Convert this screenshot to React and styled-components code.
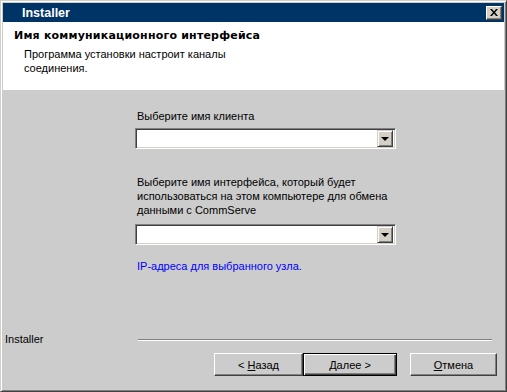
import React from "react";
import styled, { createGlobalStyle } from "styled-components";

const GlobalStyle = createGlobalStyle`
  html, body {
    margin: 0;
    padding: 0;
    background: #cccccc;
  }
  * {
    box-sizing: border-box;
  }
`;

const Window = styled.div`
  width: 507px;
  height: 392px;
  display: flex;
  flex-direction: column;
  background: #cccccc;
  border: 1px solid;
  border-color: #d4d0c8 #404040 #404040 #d4d0c8;
  box-shadow: inset 1px 1px 0 #ffffff, inset -1px -1px 0 #808080;
  padding: 2px;
  font-family: "Liberation Sans", Arial, sans-serif;
  font-size: 11px;
  line-height: 14px;
  color: #000;
`;

const TitleBar = styled.div`
  height: 19px;
  flex-shrink: 0;
  display: flex;
  align-items: center;
  justify-content: space-between;
  background: #003366;
  padding: 0 2px 0 19px;
`;

const TitleText = styled.span`
  color: #fff;
  font-weight: bold;
  font-size: 12.5px;
`;

const CloseButton = styled.div`
  width: 16px;
  height: 14px;
  display: flex;
  align-items: center;
  justify-content: center;
  background: #d4d0c8;
  border: 1px solid;
  border-color: #ffffff #404040 #404040 #ffffff;
  box-shadow: inset -1px -1px 0 #808080;
`;

const Header = styled.div`
  height: 68px;
  flex-shrink: 0;
  background: #fff;
  padding: 7px 0 0 11px;
`;

const HeaderTitle = styled.div`
  font-family: "DejaVu Sans", sans-serif;
  font-weight: bold;
  font-size: 11px;
  letter-spacing: 0.2px;
`;

const HeaderSub = styled.div`
  margin: 4px 0 0 10px;
  width: 220px;
`;

const Body = styled.div`
  flex: 1;
  display: flex;
  flex-direction: column;
`;

const Form = styled.div`
  display: flex;
  flex-direction: column;
  padding: 19px 0 0 132px;
  width: 400px;
`;

const Label = styled.div`
  padding-left: 2px;
  margin-top: ${(p) => p.$top || 0}px;
`;

const Combo = styled.div`
  width: 261px;
  height: 21px;
  margin-top: ${(p) => p.$top || 0}px;
  display: flex;
  justify-content: flex-end;
  align-items: center;
  background: #fff;
  border: 1px solid;
  border-color: #808080 #ffffff #ffffff #808080;
  box-shadow: inset 1px 1px 0 #404040, inset -1px -1px 0 #d4d0c8;
  padding: 2px;
`;

const DropButton = styled.div`
  width: 16px;
  height: 17px;
  display: flex;
  align-items: center;
  justify-content: center;
  background: #d4d0c8;
  border: 1px solid;
  border-color: #d4d0c8 #404040 #404040 #d4d0c8;
  box-shadow: inset 1px 1px 0 #ffffff, inset -1px -1px 0 #808080;
`;

const Arrow = styled.div`
  width: 0;
  height: 0;
  border-left: 4px solid transparent;
  border-right: 4px solid transparent;
  border-top: 4px solid #000;
`;

const Link = styled.div`
  color: #0000ff;
  padding-left: 2px;
  margin-top: 14px;
`;

const Footer = styled.div`
  margin-top: auto;
  display: flex;
  flex-direction: column;
  padding: 0 7px 13px 2px;
`;

const BrandRow = styled.div`
  display: flex;
  align-items: center;
`;

const Brand = styled.span`
  width: 133px;
`;

const Etched = styled.div`
  flex: 1;
  height: 2px;
  border-top: 1px solid #808080;
  border-bottom: 1px solid #ffffff;
  margin: 1px 5px 0 0;
`;

const Buttons = styled.div`
  display: flex;
  justify-content: flex-end;
  align-items: center;
  margin-top: 7px;
`;

const Button = styled.div`
  width: ${(p) => p.$w}px;
  height: 23px;
  display: flex;
  align-items: center;
  justify-content: center;
  background: #cccccc;
  border: 1px solid;
  border-color: ${(p) => (p.$default ? "#000" : "#ffffff #404040 #404040 #ffffff")};
  box-shadow: ${(p) =>
    p.$default
      ? "inset 1px 1px 0 #ffffff, inset -1px -1px 0 #404040, inset -2px -2px 0 #808080"
      : "inset -1px -1px 0 #808080"};
  margin-left: ${(p) => p.$gap || 0}px;
`;

const Key = styled.span`
  text-decoration: underline;
`;

export default function App() {
  return (
    <>
      <GlobalStyle />
      <Window>
        <TitleBar>
          <TitleText>Installer</TitleText>
          <CloseButton>
            <svg width="8" height="7" viewBox="0 0 8 7">
              <path d="M0 0h2l2 2.5L6 0h2L5 3.5 8 7H6L4 4.5 2 7H0l3-3.5z" fill="#000" />
            </svg>
          </CloseButton>
        </TitleBar>
        <Header>
          <HeaderTitle>Имя коммуникационного интерфейса</HeaderTitle>
          <HeaderSub>Программа установки настроит каналы соединения.</HeaderSub>
        </Header>
        <Body>
          <Form>
            <Label>Выберите имя клиента</Label>
            <Combo $top={5}>
              <DropButton>
                <Arrow />
              </DropButton>
            </Combo>
            <Label $top={26}>
              Выберите имя интерфейса, который будет использоваться на этом компьютере для обмена
              данными с CommServe
            </Label>
            <Combo $top={7}>
              <DropButton>
                <Arrow />
              </DropButton>
            </Combo>
            <Link>IP-адреса для выбранного узла.</Link>
          </Form>
          <Footer>
            <BrandRow>
              <Brand>Installer</Brand>
              <Etched />
            </BrandRow>
            <Buttons>
              <Button $w={89}>
                &lt;&nbsp;<Key>Н</Key>азад
              </Button>
              <Button $w={94} $default>
                <Key>Д</Key>алее&nbsp;&gt;
              </Button>
              <Button $w={87} $gap={13}>
                <Key>О</Key>тмена
              </Button>
            </Buttons>
          </Footer>
        </Body>
      </Window>
    </>
  );
}
